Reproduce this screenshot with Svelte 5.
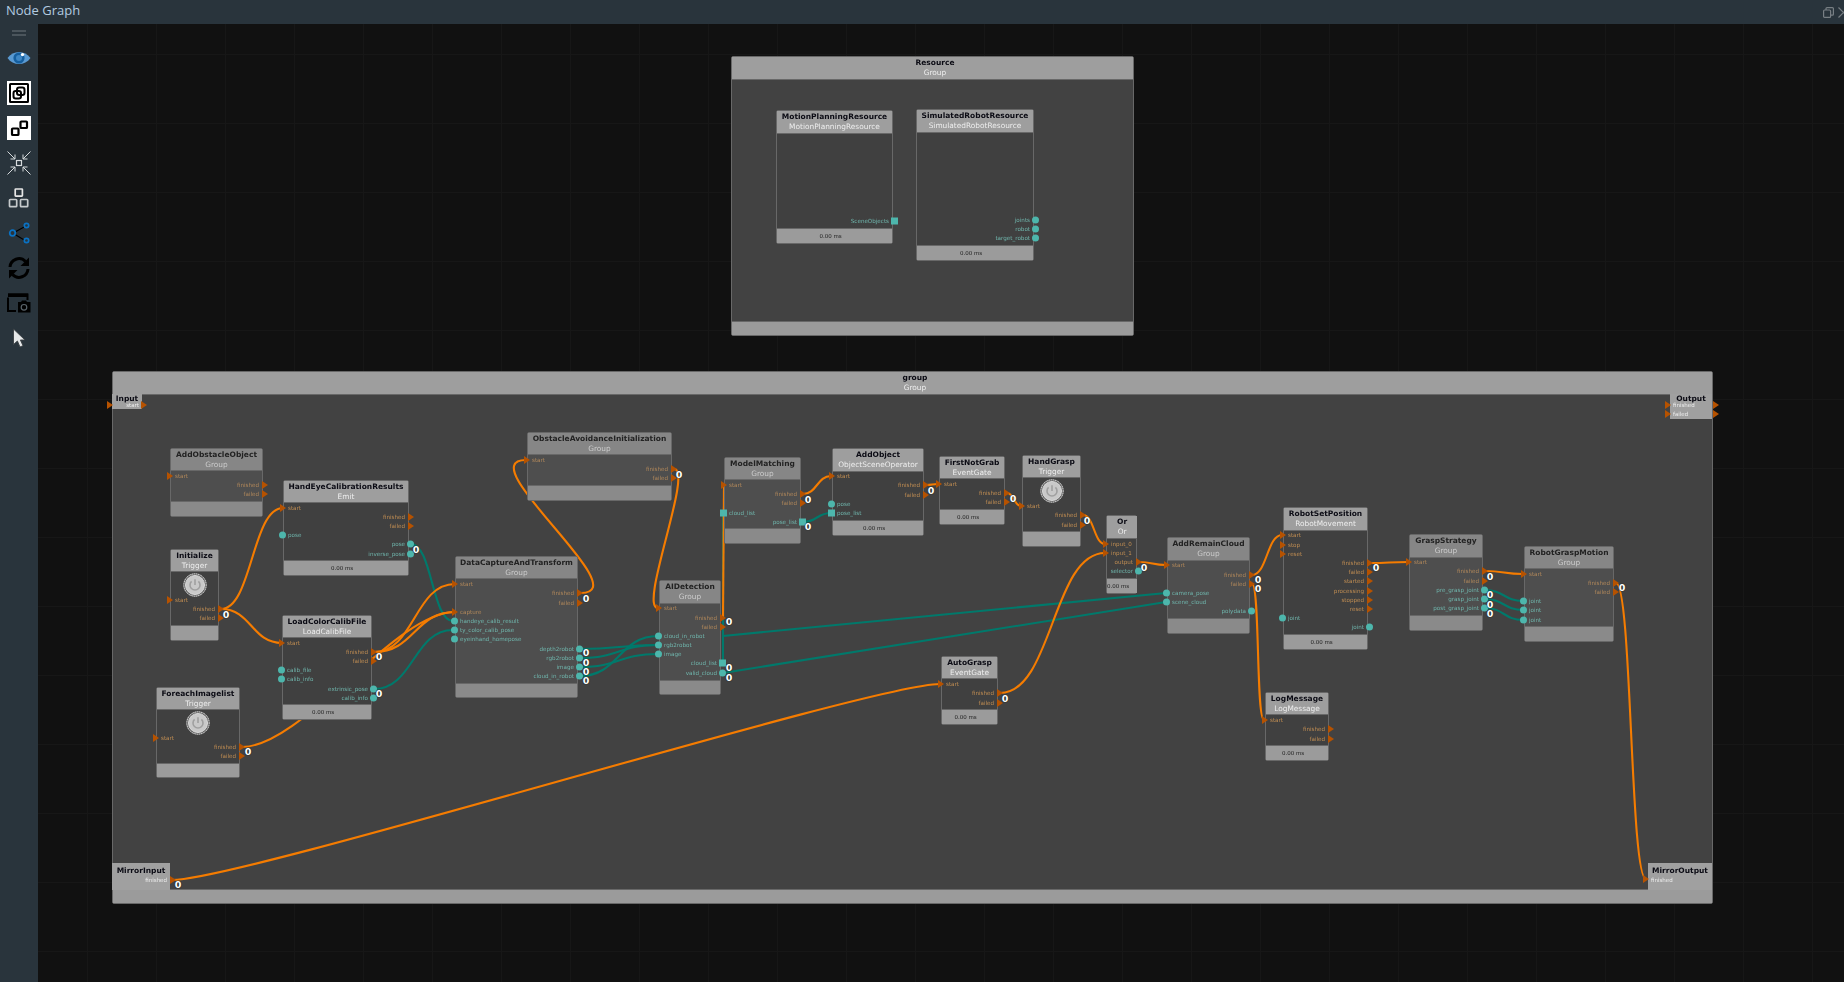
<script>
  function parsePorts(s) {
    if (!s) return [];
    return s.split('|').map((t) => {
      const [k, name, y] = t.split(' ');
      return { side: k[0] === 'L' ? 'l' : 'r', kind: k[1] || 't', name, y: +y };
    });
  }
  const raw = [
    ['AddObstacleObject','Group',171,448,263,516,470,502,'g','','L start 476|R finished 485|R failed 494'],
    ['HandEyeCalibrationResults','Emit',284,480,409,575,502,561,'','t','L start 508|R finished 517|R failed 526|Lc pose 535|Rc pose 544|Rc inverse_pose 554'],
    ['Initialize','Trigger',171,549,219,640,571,626,'','','L start 600|R finished 609|R failed 618','195,585'],
    ['LoadColorCalibFile','LoadCalibFile',283,615,372,719,637,705,'','t','L start 643|R finished 652|R failed 661|Lc calib_file 670|Lc calib_info 679|Rc extrinsic_pose 689|Rc calib_info 698'],
    ['ForeachImagelist','Trigger',157,687,240,777,709,764,'','','L start 738|R finished 747|R failed 756','198,723'],
    ['ObstacleAvoidanceInitialization','Group',528,432,672,500,454,486,'g','','L start 460|R finished 469|R failed 478'],
    ['DataCaptureAndTransform','Group',456,556,578,697,578,684,'g','','L start 584|R finished 593|R failed 603|L capture 612|Lc handeye_calib_result 621|Lc ty_color_calib_pose 630|Lc eyeinhand_homepose 639|Rc depth2robot 649|Rc rgb2robot 658|Rc image 667|Rc cloud_in_robot 676'],
    ['AIDetection','Group',660,580,721,694,603,681,'g','','L start 608|R finished 618|R failed 627|Lc cloud_in_robot 636|Lc rgb2robot 645|Lc image 654|Rs cloud_list 663|Rc valid_cloud 673'],
    ['ModelMatching','Group',725,457,801,543,479,529,'g','','L start 485|R finished 494|R failed 503|Ls cloud_list 513|Rs pose_list 522'],
    ['AddObject','ObjectSceneOperator',833,448,924,535,471,521,'','t','L start 476|R finished 485|R failed 495|Lc pose 504|Ls pose_list 513'],
    ['FirstNotGrab','EventGate',940,456,1005,524,478,510,'','t','L start 484|R finished 493|R failed 502'],
    ['HandGrasp','Trigger',1023,455,1081,546,477,532,'','','L start 506|R finished 515|R failed 525','1052,491'],
    ['AutoGrasp','EventGate',942,656,998,724,678,710,'','t','L start 684|R finished 693|R failed 703'],
    ['Or','Or',1107,515,1137,593,538,579,'','t','L input_0 544|L input_1 553|R output 562|Rc selector 571'],
    ['AddRemainCloud','Group',1168,537,1250,633,560,619,'g','','L start 565|R finished 575|R failed 584|Lc camera_pose 593|Lc scene_cloud 602|Rc polydata 611'],
    ['RobotSetPosition','RobotMovement',1284,507,1368,649,530,635,'','t','L start 535|L stop 545|L reset 554|R finished 563|R failed 572|R started 581|R processing 591|R stopped 600|R reset 609|Lc joint 618|Rc joint 627'],
    ['LogMessage','LogMessage',1266,692,1329,760,714,746,'','t','L start 720|R finished 729|R failed 739'],
    ['GraspStrategy','Group',1410,534,1483,630,557,616,'g','','L start 562|R finished 571|R failed 581|Rc pre_grasp_joint 590|Rc grasp_joint 599|Rc post_grasp_joint 608'],
    ['RobotGraspMotion','Group',1525,546,1614,641,568,627,'g','','L start 574|R finished 583|R failed 592|Lc joint 601|Lc joint 610|Lc joint 620'],
    ['MotionPlanningResource','MotionPlanningResource',777,110,893,243,133,229,'','t','Rs SceneObjects 221'],
    ['SimulatedRobotResource','SimulatedRobotResource',917,109,1034,260,132,246,'','t','Rc joints 220|Rc robot 229|Rc target_robot 238']
  ];
  const nodes = raw.map((r) => ({
    title: r[0], sub: r[1], x: r[2] - 1, y: r[3], w: r[4] - r[2] + 1, h: r[5] - r[3] + 1,
    head: r[6] - r[3], foot: r[5] - r[7] + 1, grey: r[8] === 'g', time: r[9] === 't',
    ports: parsePorts(r[10]),
    power: r[11] ? r[11].split(',').map(Number) : null
  }));

  const frames = [
    { title: 'Resource', sub: 'Group', x: 731, y: 56, w: 403, h: 280, head: 23, foot: 14 },
    { title: 'group', sub: 'Group', x: 112, y: 371, w: 1601, h: 533, head: 23, foot: 14 }
  ];

  const w = (x1, y1, x2, y2, dx) => {
    const d = dx ?? Math.abs(x2 - x1) / 2;
    return `M${x1} ${y1}C${x1 + d} ${y1} ${x2 - d} ${y2} ${x2} ${y2}`;
  };
  const orange = [
    w(221,609,283,508), w(221,609,282,643), w(242,747,455,612,60), w(374,652,455,584), w(374,652,455,612),
    w(581,593,526,460,58), w(674,469,658,608,20), 'M723 618L724 485', w(803,494,831,476), w(926,485,938,484),
    w(1007,493,1021,506), w(1083,515,1105,544), w(1000,693,1105,553), w(172,880,940,684,70), w(1139,562,1166,565),
    w(1252,575,1282,535), w(1252,584,1264,720,8), w(1370,563,1408,562), w(1485,571,1523,574), w(1616,583,1646,879,16)
  ];
  const teal = [
    w(411,544,453,621), w(374,689,453,630), w(580,649,658,645), w(580,658,658,645), w(580,667,658,654), w(580,676,658,636),
    'M723 663V513', 'M723 636L1166 593', 'M723 673L1166 602', w(803,522,831,513),
    w(1485,590,1523,601), w(1485,599,1523,610), w(1485,608,1523,620)
  ];
  const zeros = [
    [226,615],[416,550],[379,657],[379,694],[248,752],[586,599],[586,653],[586,663],[586,672],[586,681],[679,475],
    [729,622],[729,668],[729,678],[808,500],[808,527],[931,491],[1013,499],[1087,521],[1005,699],[1144,568],
    [1258,580],[1258,589],[1376,568],[1490,577],[1490,595],[1490,605],[1490,614],[1622,588],[178,885]
  ];
</script>

<div class="app">
  <header class="bar">
    <span class="name">Node Graph</span>
    <span class="winbtns">
      <svg width="11" height="11" viewBox="0 0 11 11" fill="none" stroke="#787f84" stroke-width="1.2"><rect x="0.6" y="3" width="7" height="7.4" rx="1"/><path d="M3 3V1.6a1 1 0 0 1 1-1h5.4a1 1 0 0 1 1 1v5.6a1 1 0 0 1-1 1H8"/></svg>
      <svg width="11" height="11" viewBox="0 0 11 11" fill="none" stroke="#787f84" stroke-width="1.2"><path d="M0.5 0.5L10.5 10.5M10.5 0.5L0.5 10.5"/></svg>
    </span>
  </header>
  <div class="main">
    <aside class="side">
      <div class="grip"></div>
      <div class="tool"><svg width="24" height="14" viewBox="0 0 24 14"><path d="M0.5 7C6 -1 18 -1 23.5 7C18 15 6 15 0.5 7Z" fill="#5a9ad2"/><circle cx="12" cy="7" r="5.6" fill="#155f9f"/><circle cx="12" cy="7" r="3" fill="#3f87c4"/><circle cx="15.5" cy="3.6" r="1.7" fill="#fff"/></svg></div>
      <div class="tool white"><svg width="24" height="24" viewBox="0 0 24 24" fill="none" stroke="#000"><rect x="3" y="3" width="18" height="18" rx="0.5" stroke-width="2"/><rect x="6.5" y="10" width="7.5" height="7.5" rx="2.2" stroke-width="2"/><rect x="10" y="6.5" width="7.5" height="7.5" rx="2.2" stroke-width="2"/></svg></div>
      <div class="tool white"><svg width="24" height="24" viewBox="0 0 24 24" fill="none" stroke="#000" stroke-width="2.2"><rect x="5" y="12.5" width="6.5" height="6.5" rx="0.8"/><rect x="13.5" y="5.5" width="6.5" height="6.5" rx="0.8"/></svg></div>
      <div class="tool"><svg width="24" height="24" viewBox="0 0 24 24" fill="none" stroke="#d6dadc" stroke-width="1"><rect x="9.5" y="9.5" width="5" height="5" stroke-width="1.2"/><path d="M0.5 0.5L8 8M8 3.5V8H3.5M23.5 0.5L16 8M16 3.5V8H20.5M0.5 23.5L8 16M8 20.5V16H3.5M23.5 23.5L16 16M16 20.5V16H20.5"/></svg></div>
      <div class="tool"><svg width="22" height="22" viewBox="0 0 22 22" fill="none" stroke="#c6cacc" stroke-width="1.7"><rect x="7.2" y="2" width="7.2" height="7.2" rx="0.6" stroke="#e6e6e6"/><rect x="1.5" y="12.5" width="7.2" height="7.2" rx="0.8"/><rect x="12.5" y="12.5" width="7.2" height="7.2" rx="0.8"/></svg></div>
      <div class="tool"><svg width="22" height="22" viewBox="0 0 22 22" fill="none"><path d="M7 10L17 4.5M7 12.5L17 18.5" stroke="#000" stroke-width="1.2"/><circle cx="4.5" cy="11" r="2.8" stroke="#0a72c4" stroke-width="1.7"/><circle cx="18.5" cy="3.5" r="2.2" stroke="#0a72c4" stroke-width="1.7"/><circle cx="18.5" cy="18.5" r="2.2" stroke="#0a72c4" stroke-width="1.7"/></svg></div>
      <div class="tool"><svg width="24" height="24" viewBox="0 0 24 24" fill="none" stroke="#000" stroke-width="3"><path d="M3 11A9 9 0 0 1 18.5 5.5"/><path d="M21 13A9 9 0 0 1 5.5 18.5"/><path d="M22 1.5V10H13.5Z" fill="#000" stroke="none"/><path d="M2 22.5V14H10.5Z" fill="#000" stroke="none"/></svg></div>
      <div class="tool"><svg width="24" height="22" viewBox="0 0 24 22"><path d="M1 5.5V19H9M1 2.5H20.5V8" fill="none" stroke="#000" stroke-width="2"/><path d="M1 1.5H21V5H1Z" fill="#000"/><path d="M11 10H14L15 8.5H19L20 10H23.5V20.5H11Z" fill="#000"/><circle cx="17" cy="15.3" r="2.8" fill="none" stroke="#59636a" stroke-width="1.2"/></svg></div>
      <div class="tool"><svg width="14" height="20" viewBox="0 0 14 20"><path d="M1.5 1V16.5L5.4 13L8 19L11 17.7L8.4 12H13Z" fill="#e6e8e9" stroke="#3a3f43" stroke-width="0.9"/></svg></div>
    </aside>

    <div class="canvas">
      {#each frames as f}
        <div class="frame" style="left:{f.x - 38}px;top:{f.y - 24}px;width:{f.w}px;height:{f.h}px;grid-template-rows:{f.head}px 1fr {f.foot}px">
          <div class="head"><b>{f.title}</b><i>{f.sub}</i></div>
          <div></div>
          <div class="foot"></div>
        </div>
      {/each}

      <div class="edge" style="left:74px;top:370px;width:30px;height:15px">
        <b>Input</b><span class="endr">start</span>
        <em class="tri" style="left:-5px;top:11px"></em><em class="tri" style="left:29px;top:11px"></em>
      </div>
      <div class="edge" style="left:1632px;top:370px;width:42px;height:25px">
        <b>Output</b><span class="endl a">finished</span><span class="endl c">failed</span>
        <em class="tri" style="left:-5px;top:11px"></em><em class="tri" style="left:-5px;top:20px"></em>
        <em class="tri" style="left:43px;top:11px"></em><em class="tri" style="left:43px;top:20px"></em>
      </div>
      <div class="edge" style="left:74px;top:839px;width:58px;height:27px">
        <b class="mirror">MirrorInput</b><span class="endr low">finished</span>
        <em class="tri" style="left:58px;top:17px"></em>
      </div>
      <div class="edge" style="left:1610px;top:839px;width:64px;height:27px">
        <b class="mirror">MirrorOutput</b><span class="endl low">finished</span>
        <em class="tri" style="left:-5px;top:16px"></em>
      </div>

      <svg class="wires" width="1806" height="958" viewBox="38 24 1806 958" fill="none">
        {#each teal as d}<path {d} stroke="#00796b" stroke-width="2.1"/>{/each}
        {#each orange as d}<path {d} stroke="#f57c00" stroke-width="2.1"/>{/each}
      </svg>

      {#each nodes as n}
        <div class="node" class:grey={n.grey} style="left:{n.x - 38}px;top:{n.y - 24}px;width:{n.w}px;height:{n.h}px;grid-template-rows:{n.head}px 1fr {n.foot}px">
          <div class="head"><b>{n.title}</b><i>{n.sub}</i></div>
          <div class="body"></div>
          <div class="foot">{#if n.time}<span>0.00 ms</span>{/if}</div>
          {#if n.power}
            <svg class="power" style="left:{n.power[0] - n.x - 13}px;top:{n.power[1] - n.y - 13}px" width="24" height="24" viewBox="0 0 24 24" fill="none">
              <circle cx="12" cy="12" r="11.2" fill="#5a5a5a" stroke="#fff" stroke-width="0.9" stroke-dasharray="1.4 0.5"/>
              <circle cx="12" cy="12" r="9.6" fill="#c9c9c9" stroke="#e6e6e6" stroke-width="0.8"/>
              <path d="M8.6 8.4a5 5 0 1 0 6.8 0M12 6.2V12" stroke="#a0a0a0" stroke-width="1.6"/>
            </svg>
          {/if}
          {#each n.ports as p}
            <span class="lbl {p.side} k{p.kind}" style="top:{p.y - n.y - 1}px">{p.name}</span>
            <span class="mark {p.side} m{p.kind}" style="top:{p.y - n.y - 1}px"></span>
          {/each}
        </div>
      {/each}

      {#each zeros as z}
        <span class="zero" style="left:{z[0] - 38}px;top:{z[1] - 24}px">0</span>
      {/each}
    </div>
  </div>
</div>

<style>
  :global(body) { margin: 0; background: #111; }
  .app { width: 1844px; height: 982px; display: flex; flex-direction: column; overflow: hidden; font-family: "DejaVu Sans", sans-serif; }
  .bar { height: 24px; flex: none; background: #29343c; display: flex; align-items: center; justify-content: space-between; padding: 0 0 0 6px; overflow: hidden; }
  .name { font: 13px "Open Sans", sans-serif; color: #b3cbe0; margin-top: -5px; }
  .winbtns { display: flex; gap: 4px; margin-right: -5px; }
  .main { flex: 1; display: flex; min-height: 0; }
  .side { width: 38px; flex: none; background: #29343c; display: flex; flex-direction: column; align-items: center; padding-top: 6px; }
  .grip { width: 14px; height: 2px; border-top: 2px solid #4b555c; border-bottom: 2px solid #4b555c; margin-bottom: 4px; }
  .tool { height: 35px; width: 24px; display: flex; align-items: center; justify-content: center; flex: none; }
  .tool.white svg { background: #fff; }
  .canvas { flex: 1; position: relative; overflow: hidden; background-color: #111;
    background-image: linear-gradient(to right, #171717 1px, transparent 1px), linear-gradient(to bottom, #171717 1px, transparent 1px);
    background-size: 69px 69px; background-position: 49px 30px; }
  .wires { position: absolute; left: 0; top: 0; z-index: 2; filter: blur(0.3px); }
  .frame, .node { position: absolute; box-sizing: border-box; display: grid; border: 1px solid #686868; border-radius: 2px; filter: blur(0.3px); }
  .frame { background: #424242; z-index: 1; }
  .frame .head { padding-left: 5px; }
  .frame .head b, .frame .head i { line-height: 10px; }
  .node { background: #404040; z-index: 3; }
  .head { display: flex; flex-direction: column; align-items: center; background: #9e9e9e; padding-top: 1px; border-bottom: 1px solid #686868; box-sizing: border-box; overflow: visible; }
  .head b, .head i { font-size: 7.5px; line-height: 9.8px; white-space: nowrap; font-style: normal; }
  .head b { font-weight: 700; color: #0b0b14; }
  .head i { color: #eee; font-size: 7.4px; }
  .foot { background: #9b9b9b; border-top: 1px solid #686868; box-sizing: border-box; display: flex; align-items: center; justify-content: center; padding-right: 8px; }
  .foot span { font-size: 5.5px; color: #222; white-space: nowrap; }
  .grey .head { background: #868686; }
  .grey .head b { color: #222; }
  .grey .head i { color: #ccc; }
  .grey .body { background: #4e4e4e; }
  .grey .foot { background: #8a8a8a; }
  .lbl { position: absolute; font-size: 5.6px; line-height: 8px; white-space: nowrap; transform: translateY(-50%); }
  .lbl.l { left: 4px; }
  .lbl.r { right: 3px; }
  .kt { color: #c08d52; }
  .kc, .ks { color: #6fb5ac; }
  .grey .kt { color: #b0875a; }
  .mark { position: absolute; transform: translateY(-50%); }
  .mt { width: 0; height: 0; border-left: 6px solid #b65200; border-top: 4px solid transparent; border-bottom: 4px solid transparent; }
  .mt.l { left: -4px; }
  .mt.r { right: -6px; }
  .mc, .ms { width: 7px; height: 7px; background: #4db6ac; }
  .mc { border-radius: 50%; }
  .mc.l, .ms.l { left: -5px; }
  .mc.r, .ms.r { right: -6px; }
  .power { position: absolute; top: 0; }
  .zero { position: absolute; z-index: 4; font-size: 9.5px; font-weight: 700; color: #fff; line-height: 10px; transform: translate(-50%, -50%); text-shadow: 0 0 1px #222, 0 0 1px #222; }
  .edge { position: absolute; z-index: 3; background: #a0a0a0; filter: blur(0.3px); }
  .edge b { position: absolute; top: 0; left: 0; right: 0; text-align: center; font-size: 7.5px; line-height: 9px; color: #0b0b14; }
  .edge .mirror { top: 3px; }
  .endr, .endl { position: absolute; font-size: 5.5px; line-height: 8px; color: #eee; white-space: nowrap; }
  .endr { right: 3px; top: 7px; }
  .endl { left: 3px; }
  .endl.a { top: 7px; }
  .endl.c { top: 16px; }
  .low { top: 13px; }
  .tri { position: absolute; width: 0; height: 0; border-left: 6px solid #b65200; border-top: 4px solid transparent; border-bottom: 4px solid transparent; transform: translateY(-50%); }
</style>
